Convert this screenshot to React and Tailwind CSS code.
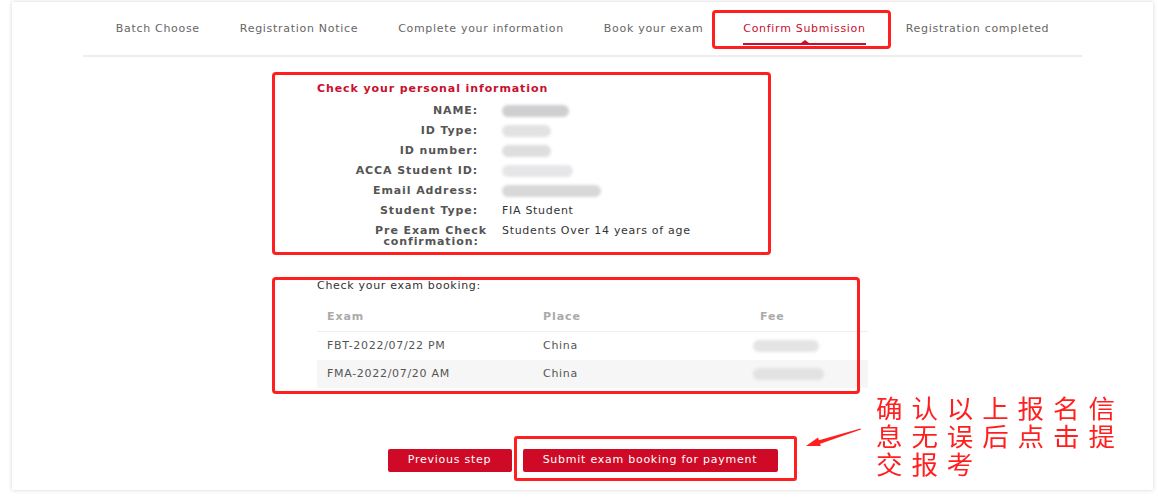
import React from "react";

const steps = [
  "Batch Choose",
  "Registration Notice",
  "Complete your information",
  "Book your exam",
  "Confirm Submission",
  "Registration completed",
];

const info = [
  { label: "NAME:", blur: "w-[67px] bg-[#cfcfd2]" },
  { label: "ID Type:", blur: "w-[49px] bg-[#e2e2e2]" },
  { label: "ID number:", blur: "w-[49px] bg-[#dedede]" },
  { label: "ACCA Student ID:", blur: "w-[71px] bg-[#e6e6e9]" },
  { label: "Email Address:", blur: "w-[99px] bg-[#d8d8d8]" },
  { label: "Student Type:", value: "FIA Student" },
];

const bookings = [
  { exam: "FBT-2022/07/22 PM", place: "China" },
  { exam: "FMA-2022/07/20 AM", place: "China" },
];

function Blur({ className }) {
  return <div className={`h-[12px] rounded-full blur-[1.5px] ${className}`} />;
}

export default function App() {
  return (
    <div className="min-h-screen bg-white pt-[2px] pl-[12px] font-['DejaVu_Sans',Verdana,sans-serif] text-[11px] tracking-[0.7px]">
      <div className="relative w-[1141px] h-[488px] bg-white shadow-[0_0_4px_rgba(0,0,0,0.18)]">
        {/* steps */}
        <div className="mx-[71px] h-[55px] border-b-2 border-[#ededed] flex justify-center">
          {steps.map((s) => {
            const active = s === "Confirm Submission";
            return (
              <div key={s} className="relative px-[20px] pt-[20px] flex flex-col items-stretch">
                <span className={`leading-[14px] whitespace-nowrap ${active ? "text-[#c8102e]" : "text-[#666]"}`}>{s}</span>
                {active && (
                  <>
                    <div className="mt-[7px] h-[2px] bg-[#c8102e]" />
                    <div className="absolute left-1/2 top-[38px] -translate-x-1/2 w-0 h-0 border-x-[4px] border-x-transparent border-b-[3px] border-b-[#c8102e]" />
                    <div className="absolute -left-[11px] -right-[5px] top-[8px] h-[39px] border-[3px] border-[#ff1f1f] rounded-[4px]" />
                  </>
                )}
              </div>
            );
          })}
        </div>

        {/* personal information */}
        <div className="mt-[15px] ml-[260px] w-[499px] h-[183px] border-[3px] border-[#ff1f1f] rounded-[4px] pl-[42px] pt-[7px]">
          <div className="leading-[14px] font-bold tracking-[0.9px] text-[#c8102e]">Check your personal information</div>
          <div className="mt-[5px]">
            {info.map((r) => (
              <div key={r.label} className="flex h-[20px] items-center">
                <div className="w-[161px] text-right font-bold tracking-[0.9px] text-[#555]">{r.label}</div>
                <div className="ml-[24px] text-[#333]">
                  {r.value ? r.value : <Blur className={r.blur} />}
                </div>
              </div>
            ))}
            <div className="flex">
              <div className="w-[161px] flex justify-end pt-[4px]">
                <div className="-mr-[9px] text-center leading-[11px] font-bold tracking-[0.9px] text-[#555]">
                  Pre Exam Check
                  <br />
                  confirmation:
                </div>
              </div>
              <div className="ml-[24px] leading-[20px] text-[#333]">Students Over 14 years of age</div>
            </div>
          </div>
        </div>

        {/* exam booking */}
        <div className="mt-[22px] ml-[260px] w-[588px] h-[117px] outline-3 outline-[#ff1f1f] -outline-offset-3 rounded-[4px] pl-[45px] pt-[3px]">
          <div className="leading-[11px] text-[#333]">Check your exam booking:</div>
          <div className="mt-[13px] w-[551px]">
            <div className="flex h-[28px] items-center border-b border-[#eee] font-bold tracking-[0.9px] text-[#aaa]">
              <div className="w-[226px] pl-[10px]">Exam</div>
              <div className="w-[217px]">Place</div>
              <div className="flex-1">Fee</div>
            </div>
            {bookings.map((b, i) => (
              <div key={b.exam} className={`flex h-[28px] items-center text-[#555] ${i % 2 ? "bg-[#f6f6f6]" : "bg-white"}`}>
                <div className="w-[226px] pl-[10px]">{b.exam}</div>
                <div className="w-[217px]">{b.place}</div>
                <div className="flex-1 -ml-[7px]">
                  <Blur className={i ? "w-[71px] bg-[#e2e2e2]" : "w-[66px] bg-[#e4e4e4]"} />
                </div>
              </div>
            ))}
          </div>
        </div>

        {/* buttons */}
        <div className="mt-[55px] flex justify-center gap-[11px]">
          <button className="w-[124px] h-[23px] rounded-[2px] bg-[#cf0a27] text-white text-[11px] tracking-[0.75px]">Previous step</button>
          <div className="relative">
            <button className="w-[255px] h-[23px] rounded-[2px] bg-[#cf0a27] text-white text-[11px] tracking-[0.75px]">
              Submit exam booking for payment
            </button>
            <div className="absolute -left-[9px] -top-[13px] -right-[19px] -bottom-[9px] border-[3px] border-[#ff1f1f] rounded-[3px]" />
          </div>
        </div>

        {/* annotation */}
        <svg className="absolute left-[788px] top-[422px]" width="64" height="28" viewBox="0 0 64 28">
          <polygon points="6,22 20.8,22.1 18,13.5" fill="#ff1f1f" />
          <polygon points="18,16.5 19.5,20 61,5.6 60.5,4.4" fill="#ff1f1f" />
        </svg>
        <div className="absolute left-[864px] top-[391px] origin-left scale-x-[1.06] text-[25px] leading-[28px] tracking-[8.4px] text-[#ff1f1f] whitespace-nowrap font-['Noto_Sans_CJK_SC',sans-serif]">
          确认以上报名信
          <br />
          息无误后点击提
          <br />
          交报考
        </div>
      </div>
    </div>
  );
}
